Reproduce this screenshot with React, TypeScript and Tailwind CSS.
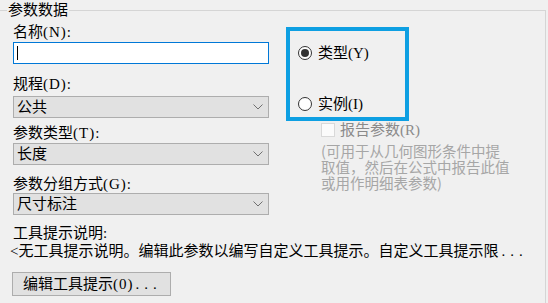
import React from 'react';

const font = { fontFamily: '"Liberation Serif", "Noto Sans CJK SC", serif' };

function Chevron() {
  return (
    <svg width="10" height="6" viewBox="0 0 10 6" className="text-[#707070]">
      <path d="M0.5 0.5 L5 5 L9.5 0.5" fill="none" stroke="currentColor" strokeWidth="1" />
    </svg>
  );
}

function Select({ value }: { value: string }) {
  return (
    <div className="flex h-[22px] items-center justify-between border border-[#adadad] bg-[#e1e1e1] pl-[3px] pr-[5px] text-[15px] leading-[18px]">
      <span>{value}</span>
      <Chevron />
    </div>
  );
}

function Label({ children, className = '' }: { children: React.ReactNode; className?: string }) {
  return <div className={`h-[18px] text-[15px] leading-[18px] ${className}`}>{children}</div>;
}

function Radio({ checked, label }: { checked: boolean; label: string }) {
  return (
    <div className="flex h-[18px] items-center gap-[6px] text-[15px] leading-[18px]">
      <span className="flex h-[14px] w-[14px] items-center justify-center rounded-full border border-[#333] bg-white">
        {checked && <span className="h-[8px] w-[8px] rounded-full bg-[#333]" />}
      </span>
      <span>{label}</span>
    </div>
  );
}

export default function App() {
  return (
    <div className="h-[303px] w-[548px] overflow-hidden bg-[#f0f0f0] text-black" style={font}>
      <fieldset className="mr-[2px] h-[400px] border-t border-r border-[#d5d5d5]">
        <legend className="ml-[7px] px-[1px] text-[15px] leading-[20px]">参数数据</legend>
        <div className="flex">
          <div className="ml-[13px] w-[256px]">
            <Label className="mt-[3px]">
              名称<span className="tracking-[1px]">(N):</span>
            </Label>
            <div className="mt-[1px] flex h-[22px] items-center border border-[#0078d7] bg-white pl-[3px]">
              <span className="h-[14px] w-[1px] bg-black" />
            </div>
            <Label className="mt-[11px]">
              规程<span className="tracking-[1px]">(D):</span>
            </Label>
            <div className="mt-[3px]">
              <Select value="公共" />
            </div>
            <Label className="mt-[6px]">
              参数类型<span className="tracking-[1px]">(T):</span>
            </Label>
            <div className="mt-[1px]">
              <Select value="长度" />
            </div>
            <Label className="mt-[10px]">
              参数分组方式<span className="tracking-[1px]">(G):</span>
            </Label>
            <Select value="尺寸标注" />
            <Label className="mt-[9px]">工具提示说明:</Label>
            <div className="-ml-[3px] w-[540px] whitespace-nowrap text-[15px] leading-[18px]">
              &lt;无工具提示说明。编辑此参数以编写自定义工具提示。自定义工具提示限
              <span className="ml-[3px] tracking-[5px]">...</span>
            </div>
            <button className="-ml-[1px] mt-[12px] flex h-[24px] w-[159px] items-center border border-[#adadad] bg-[#e1e1e1] pl-[10px] text-[15px] leading-[18px]">
              编辑工具提示<span className="tracking-[1px]">(0)</span>
              <span className="ml-[2px] tracking-[5px]">...</span>
            </button>
          </div>
          <div className="relative ml-[29px] w-[230px]">
            <div className="mt-[24px]">
              <Radio checked label="类型(Y)" />
            </div>
            <div className="mt-[33px]">
              <Radio checked={false} label="实例(I)" />
            </div>
            <div className="ml-[23px] mt-[8px] flex h-[18px] items-center gap-[5px] text-[15px] leading-[18px] text-[#8a8a8a]">
              <span className="h-[14px] w-[14px] border border-[#d9d9d9] bg-[#fbfbfb]" />
              <span>报告参数(R)</span>
            </div>
            <div
              className="ml-[23px] mt-[4px] text-[14.5px] leading-[16px] text-[#a6a6a6]"
              style={{ fontFamily: '"Noto Sans CJK SC", "Noto Sans", sans-serif' }}
            >
              (可用于从几何图形条件中提
              <br />
              取值，然后在公式中报告此值
              <br />
              或用作明细表参数)
            </div>
            <div className="pointer-events-none absolute left-[-12px] top-[7px] h-[94px] w-[123px] border-[4px] border-[#0e9fe2]" />
          </div>
        </div>
      </fieldset>
    </div>
  );
}
